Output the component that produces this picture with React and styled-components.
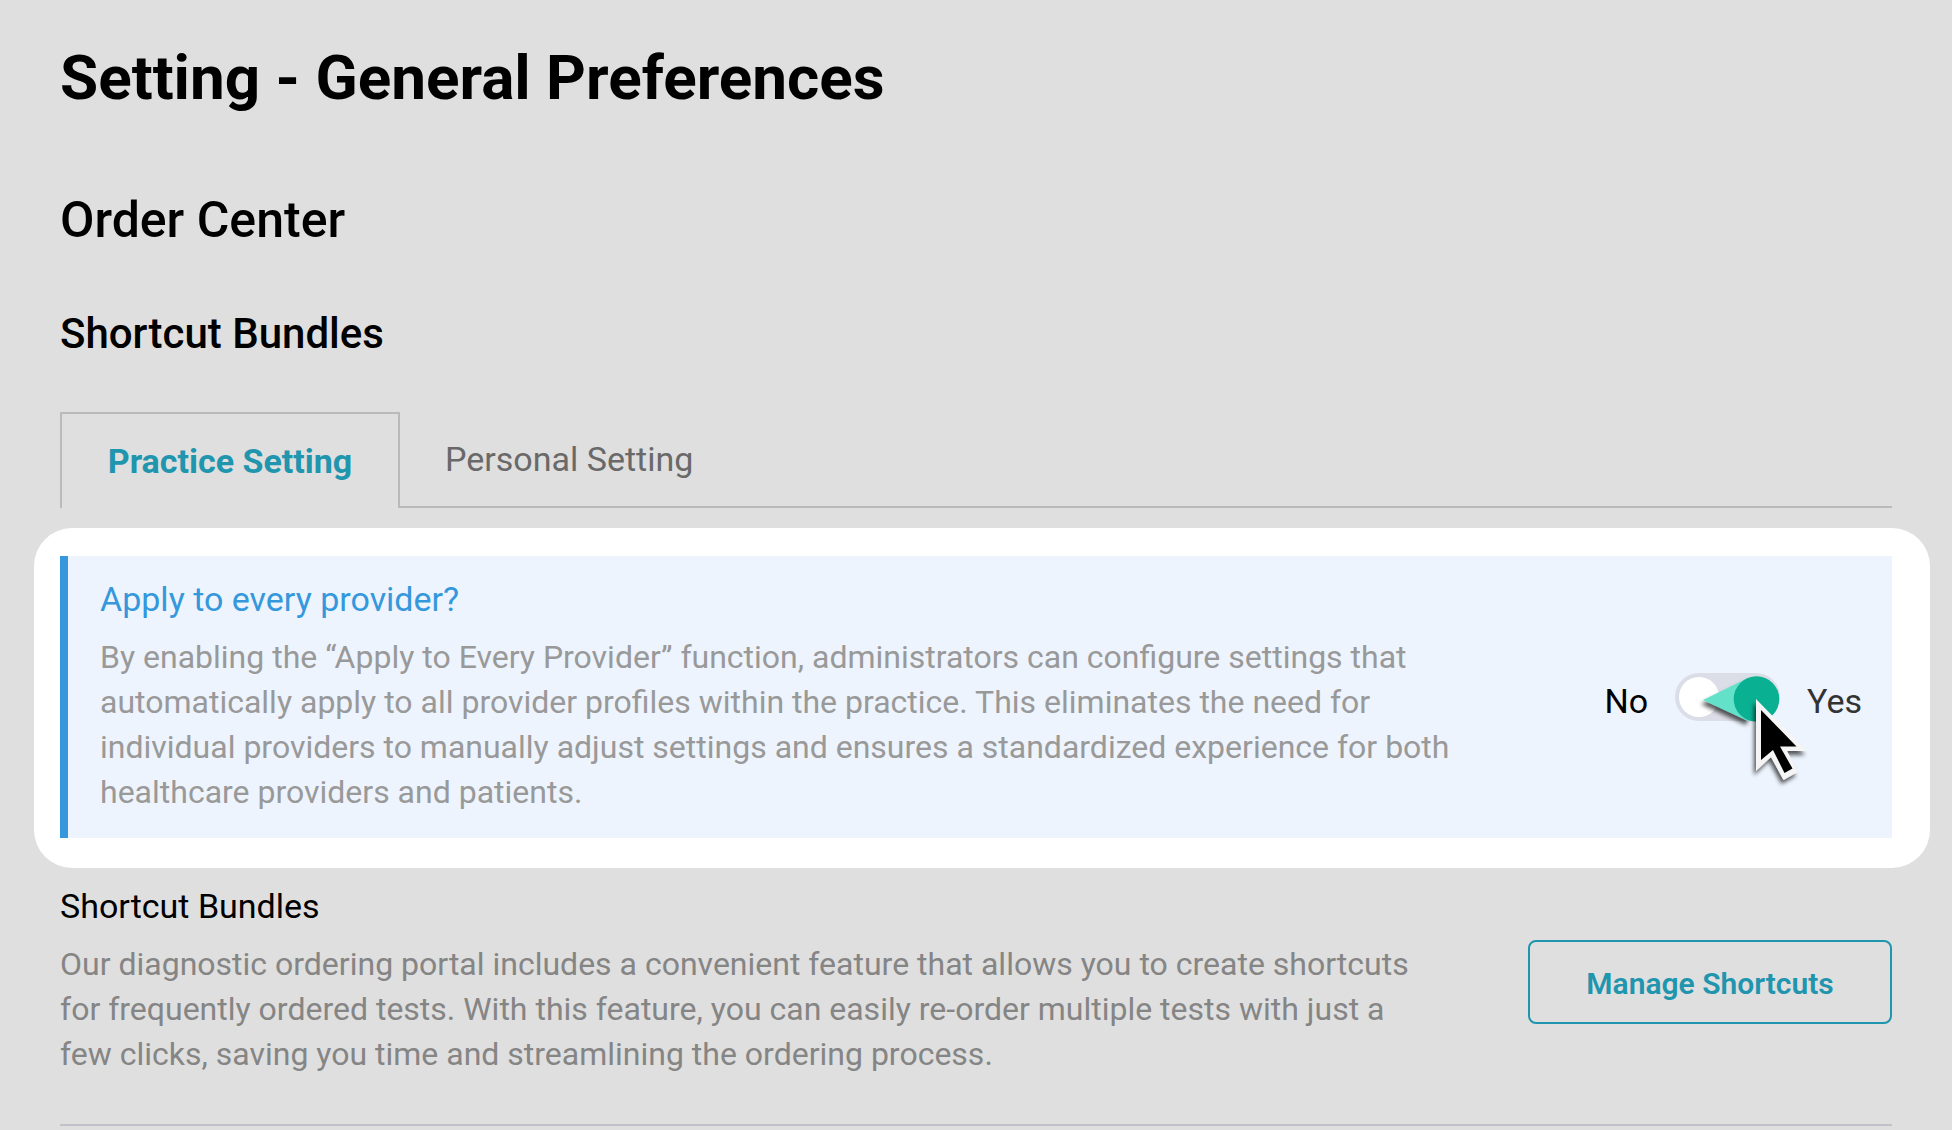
import React, { useState } from 'react';
import styled, { createGlobalStyle } from 'styled-components';

const GlobalStyle = createGlobalStyle`
  * {
    box-sizing: border-box;
  }

  body {
    margin: 0;
    background-color: #dfdfdf;
    color: #000000;
    font-family: Roboto, 'Liberation Sans', sans-serif;
  }

  button {
    font-family: inherit;
    cursor: pointer;
  }
`;

const Page = styled.main`
  padding: 42px 22px 0 34px;
`;

const Section = styled.section`
  padding: 0 38px 0 26px;
`;

const PageTitle = styled.h1`
  margin: 0 0 78px;
  font-size: 62px;
  font-weight: 700;
  line-height: 72px;
`;

const AreaTitle = styled.h2`
  margin: 0 0 62px;
  font-size: 50px;
  font-weight: 500;
  line-height: 56px;
`;

const GroupTitle = styled.h3`
  margin: 0 0 54px;
  font-size: 42px;
  font-weight: 500;
  line-height: 48px;
`;

const Tabs = styled.div`
  display: flex;
  align-items: stretch;

  &::after {
    content: '';
    flex: 1;
    border-bottom: 2px solid #bababa;
  }
`;

const Tab = styled.button`
  min-width: 340px;
  height: 96px;
  padding: 0 45px;
  border: 2px solid #bababa;
  border-width: ${({ $active }) => ($active ? '2px 2px 0' : '0 0 2px')};
  background: none;
  color: ${({ $active }) => ($active ? '#1f95ae' : '#696969')};
  font-size: 34px;
  font-weight: ${({ $active }) => ($active ? 700 : 400)};
  line-height: 40px;
  text-align: ${({ $active }) => ($active ? 'center' : 'left')};
`;

const Highlight = styled.section`
  margin-top: 20px;
  padding: 28px 38px 30px 26px;
  border-radius: 38px;
  background-color: #ffffff;
`;

const Panel = styled.div`
  display: flex;
  align-items: center;
  justify-content: space-between;
  gap: 40px;
  padding: 23px 30px 23px 32px;
  border-left: 8px solid #3598dc;
  background-color: #edf4fd;
`;

const Row = styled.div`
  display: flex;
  align-items: center;
  justify-content: space-between;
  gap: 40px;
  padding: 18px 0 47px;
  border-bottom: 2px solid #c1c1ca;
`;

const Info = styled.div`
  max-width: 1360px;
`;

const ItemTitle = styled.h4`
  margin: 0 0 16px;
  color: ${({ $accent }) => ($accent ? '#3598dc' : '#000000')};
  font-size: 34px;
  font-weight: 400;
  line-height: 40px;
`;

const Description = styled.p`
  margin: 0;
  color: ${({ $dim }) => ($dim ? '#858585' : '#999999')};
  font-size: 32px;
  line-height: 45px;
`;

const SwitchGroup = styled.div`
  display: flex;
  align-items: center;
  flex-shrink: 0;
  gap: 27px;
`;

const SwitchLabel = styled.label`
  padding-top: 8px;
  color: ${({ $muted }) => ($muted ? '#333333' : '#000000')};
  font-size: 34px;
  line-height: 40px;
`;

const SwitchBox = styled.div`
  position: relative;
  width: 105px;
  height: 48px;
`;

const SwitchInput = styled.input`
  appearance: none;
  display: flex;
  align-items: center;
  width: 100%;
  height: 100%;
  margin: 0;
  padding: 4px;
  border-radius: 24px;
  background-color: #dcdee7;
  cursor: pointer;

  &::before {
    content: '';
    width: 40px;
    height: 40px;
    border-radius: 50%;
    background-color: #ffffff;
  }
`;

const Pointer = styled.svg`
  position: absolute;
  top: 0;
  left: 0;
  overflow: visible;
  pointer-events: none;
`;

const OutlineButton = styled.button`
  flex-shrink: 0;
  min-width: 364px;
  padding: 22px 32px 18px;
  border: 2px solid #1f95ae;
  border-radius: 8px;
  background: none;
  color: #1f95ae;
  font-size: 30px;
  font-weight: 600;
  line-height: 40px;
`;

const TABS = ['Practice Setting', 'Personal Setting'];

const DragPointer = () => (
  <Pointer width="140" height="112" viewBox="0 0 140 112" aria-hidden="true">
    <defs>
      <filter id="shadow" x="-30%" y="-30%" width="160%" height="160%">
        <feDropShadow dx="-2" dy="4" stdDeviation="2" floodColor="#000000" floodOpacity="0.65" />
      </filter>
    </defs>
    <path d="M28 27 L73 5 L82 26 L73 48 Z" fill="#63e2c9" filter="url(#shadow)" />
    <circle cx="81.5" cy="26" r="22.8" fill="#09b092" />
    <g filter="url(#shadow)">
      <path d="M81 26 V98 L96 84 L108.5 107 L122.5 99 L112 78 L132 78 Z" fill="#f5f5f5" />
      <path d="M86 37 V87 L98 77 L109.5 100 L117.5 95.5 L105 73.5 L121.5 73.5 Z" fill="#000000" />
    </g>
  </Pointer>
);

const ProviderSwitch = () => {
  const [checked, setChecked] = useState(true);

  return (
    <SwitchGroup>
      <SwitchLabel htmlFor="every-provider">No</SwitchLabel>
      <SwitchBox>
        <SwitchInput
          id="every-provider"
          type="checkbox"
          role="switch"
          checked={checked}
          onChange={e => setChecked(e.target.checked)}
        />
        {checked && <DragPointer />}
      </SwitchBox>
      <SwitchLabel htmlFor="every-provider" $muted>
        Yes
      </SwitchLabel>
    </SwitchGroup>
  );
};

const App = () => {
  const [active, setActive] = useState(TABS[0]);

  return (
    <>
      <GlobalStyle />
      <Page>
        <Section>
          <PageTitle>Setting - General Preferences</PageTitle>
          <AreaTitle>Order Center</AreaTitle>
          <GroupTitle>Shortcut Bundles</GroupTitle>
          <Tabs role="tablist">
            {TABS.map(tab => (
              <Tab
                key={tab}
                type="button"
                role="tab"
                aria-selected={tab === active}
                $active={tab === active}
                onClick={() => setActive(tab)}
              >
                {tab}
              </Tab>
            ))}
          </Tabs>
        </Section>

        <Highlight>
          <Panel>
            <Info>
              <ItemTitle $accent>Apply to every provider?</ItemTitle>
              <Description>
                By enabling the “Apply to Every Provider” function, administrators can configure settings that
                automatically apply to all provider profiles within the practice. This eliminates the need for
                individual providers to manually adjust settings and ensures a standardized experience for both
                healthcare providers and patients.
              </Description>
            </Info>
            <ProviderSwitch />
          </Panel>
        </Highlight>

        <Section>
          <Row>
            <Info>
              <ItemTitle>Shortcut Bundles</ItemTitle>
              <Description $dim>
                Our diagnostic ordering portal includes a convenient feature that allows you to create shortcuts
                for frequently ordered tests. With this feature, you can easily re-order multiple tests with just a
                few clicks, saving you time and streamlining the ordering process.
              </Description>
            </Info>
            <OutlineButton type="button">Manage Shortcuts</OutlineButton>
          </Row>
        </Section>
      </Page>
    </>
  );
};

export default App;
